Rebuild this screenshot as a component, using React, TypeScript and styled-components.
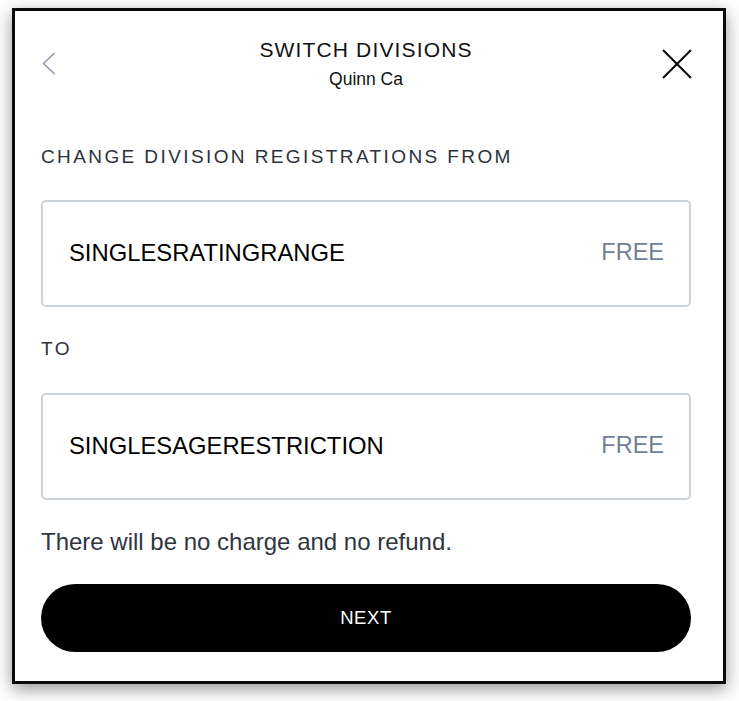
import React from 'react';
import styled, {createGlobalStyle} from 'styled-components';

const GlobalStyle = createGlobalStyle`
    html, body {
        margin: 0;
        padding: 0;
        background: #ffffff;
        font-family: "Liberation Sans", Arial, Helvetica, sans-serif;
    }
    * {
        box-sizing: border-box;
    }
`;

const Page = styled.div`
    padding: 8px 0 16px 12px;
    min-height: 701px;
`;

const Modal = styled.div`
    width: 714px;
    border: 3px solid #0a0a0a;
    background: #fff;
    box-shadow: 0 5px 16px rgba(0, 0, 0, 0.42);
    padding: 28px 32px 29px 26px;
    display: flex;
    flex-direction: column;
`;

const Header = styled.div`
    display: flex;
    align-items: center;
    margin-bottom: 58px;
`;

const IconSlot = styled.button<{ $align: 'left' | 'right' }>`
    width: 40px;
    height: 40px;
    padding: 0;
    border: none;
    background: none;
    cursor: pointer;
    display: flex;
    align-items: center;
    justify-content: ${(p) => (p.$align === 'left' ? 'flex-start' : 'flex-end')};
`;

const Heading = styled.div`
    flex: 1;
    text-align: center;
    display: flex;
    flex-direction: column;
    align-items: center;
    gap: 11px;
`;

const Title = styled.div`
    font-size: 21px;
    line-height: 1;
    letter-spacing: 1.15px;
    color: #111;
    text-transform: uppercase;
`;

const Subtitle = styled.div`
    font-size: 17.5px;
    line-height: 1;
    color: #111;
`;

const SectionLabel = styled.div<{ $gap: number }>`
    font-size: 19px;
    line-height: 1;
    letter-spacing: 2.4px;
    color: #2b323b;
    text-transform: uppercase;
    margin-bottom: ${(p) => p.$gap}px;
`;

const DivisionCard = styled.div<{ $gap: number }>`
    height: 107px;
    border: 2px solid #ccd4d9;
    border-radius: 5px;
    padding: 0 25px 0 26px;
    display: flex;
    align-items: center;
    justify-content: space-between;
    margin-bottom: ${(p) => p.$gap}px;
`;

const DivisionName = styled.span`
    font-size: 23.8px;
    line-height: 1;
    color: #000;
`;

const Price = styled.span`
    font-size: 23.5px;
    line-height: 1;
    color: #718096;
`;

const Note = styled.p`
    margin: 0 0 30px;
    font-size: 24px;
    line-height: 1;
    color: #2f3640;
`;

const NextButton = styled.button`
    height: 68px;
    width: 100%;
    border: none;
    border-radius: 34px;
    background: #000;
    color: #fff;
    font-family: "Liberation Sans", Arial, sans-serif;
    font-size: 18.5px;
    letter-spacing: 0.6px;
    cursor: pointer;
`;

const BackIcon = () => (
    <svg width="14" height="23" viewBox="0 0 14 23" style={{marginLeft: 1}}>
        <polyline points="12.5,1 1.5,11.5 12.5,22" fill="none" stroke="#8796a8" strokeWidth="1.4"/>
    </svg>
);

const CloseIcon = () => (
    <svg width="30" height="30" viewBox="0 0 30 30" style={{marginRight: -1}}>
        <line x1="1" y1="1" x2="29" y2="29" stroke="#000" strokeWidth="2"/>
        <line x1="29" y1="1" x2="1" y2="29" stroke="#000" strokeWidth="2"/>
    </svg>
);

const divisions = {
    from: {name: 'SINGLESRATINGRANGE', price: 'FREE'},
    to: {name: 'SINGLESAGERESTRICTION', price: 'FREE'},
};

const App = () => {
    return (
        <Page>
            <GlobalStyle/>
            <Modal>
                <Header>
                    <IconSlot $align="left" aria-label="Back"><BackIcon/></IconSlot>
                    <Heading>
                        <Title>Switch Divisions</Title>
                        <Subtitle>Quinn Ca</Subtitle>
                    </Heading>
                    <IconSlot $align="right" aria-label="Close"><CloseIcon/></IconSlot>
                </Header>
                <SectionLabel $gap={34}>Change division registrations from</SectionLabel>
                <DivisionCard $gap={32}>
                    <DivisionName>{divisions.from.name}</DivisionName>
                    <Price>{divisions.from.price}</Price>
                </DivisionCard>
                <SectionLabel $gap={35}>To</SectionLabel>
                <DivisionCard $gap={30}>
                    <DivisionName>{divisions.to.name}</DivisionName>
                    <Price>{divisions.to.price}</Price>
                </DivisionCard>
                <Note>There will be no charge and no refund.</Note>
                <NextButton>NEXT</NextButton>
            </Modal>
        </Page>
    );
};

export default App;
